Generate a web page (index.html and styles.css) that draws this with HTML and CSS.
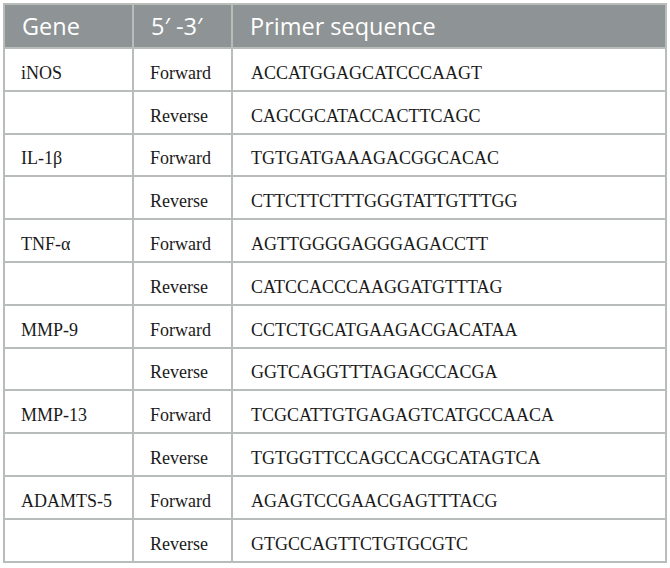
FILE: index.html
```html
<!DOCTYPE html>
<html>
<head>
<meta charset="utf-8">
<link rel="stylesheet" href="styles.css">
</head>
<body>
<table class="primers">
  <thead>
    <tr><th class="c-gene">Gene</th><th class="c-dir">5′ -3′</th><th class="c-seq">Primer sequence</th></tr>
  </thead>
  <tbody>
    <tr><td>iNOS</td><td>Forward</td><td>ACCATGGAGCATCCCAAGT</td></tr>
    <tr><td></td><td>Reverse</td><td>CAGCGCATACCACTTCAGC</td></tr>
    <tr><td>IL-1β</td><td>Forward</td><td>TGTGATGAAAGACGGCACAC</td></tr>
    <tr><td></td><td>Reverse</td><td>CTTCTTCTTTGGGTATTGTTTGG</td></tr>
    <tr><td>TNF-α</td><td>Forward</td><td>AGTTGGGGAGGGAGACCTT</td></tr>
    <tr><td></td><td>Reverse</td><td>CATCCACCCAAGGATGTTTAG</td></tr>
    <tr><td>MMP-9</td><td>Forward</td><td>CCTCTGCATGAAGACGACATAA</td></tr>
    <tr><td></td><td>Reverse</td><td>GGTCAGGTTTAGAGCCACGA</td></tr>
    <tr><td>MMP-13</td><td>Forward</td><td>TCGCATTGTGAGAGTCATGCCAACA</td></tr>
    <tr><td></td><td>Reverse</td><td>TGTGGTTCCAGCCACGCATAGTCA</td></tr>
    <tr><td>ADAMTS-5</td><td>Forward</td><td>AGAGTCCGAACGAGTTTACG</td></tr>
    <tr><td></td><td>Reverse</td><td>GTGCCAGTTCTGTGCGTC</td></tr>
  </tbody>
</table>
</body>
</html>
```
FILE: styles.css
```css
html, body {
  margin: 0;
  padding: 0;
  background: #ffffff;
}
body {
  padding: 3px 3px 0 3px;
}
.primers {
  width: 664px;
  border-collapse: collapse;
  border: 2px solid #b9bdba;
  table-layout: fixed;
}
.primers th {
  background: #8e9395;
  color: #ffffff;
  font-family: "Open Sans", "Noto Sans", sans-serif;
  font-weight: 400;
  font-size: 23.5px;
  text-align: left;
  height: 44px;
  padding: 0 0 0 17px;
  border: 2px solid #b9bdba;
  border-top: none;
  border-bottom: none;
  box-sizing: border-box;
}
.primers .c-gene { width: 129px; }
.primers .c-dir { width: 99px; }
.primers td {
  font-family: "Liberation Serif", "Times New Roman", serif;
  font-size: 18px;
  color: #1a1a1a;
  height: 42.8px;
  padding: 8px 0 0 16px;
  border: 2px solid #b9bdba;
  box-sizing: border-box;
}
.primers td:last-child { padding-left: 18px; }
```
